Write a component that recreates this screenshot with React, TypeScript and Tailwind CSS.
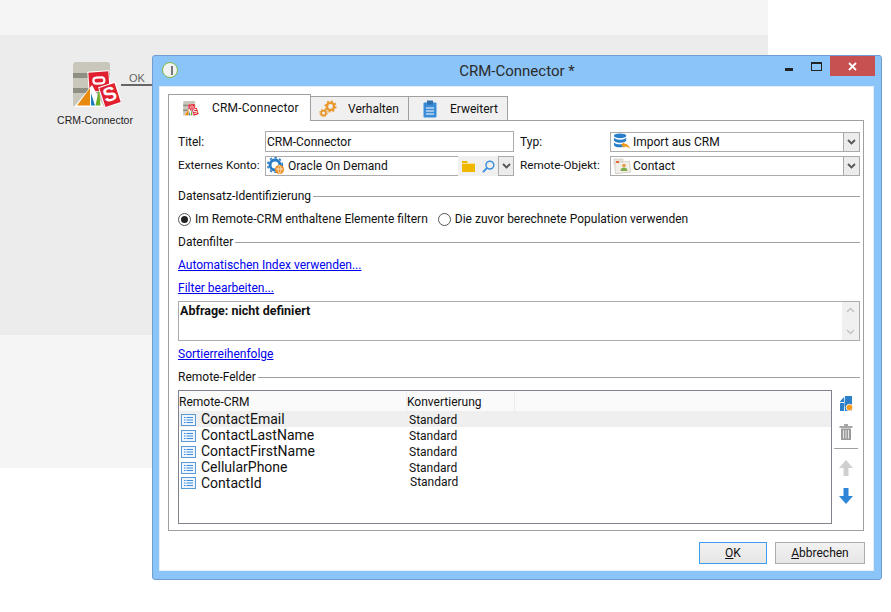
import type { ReactNode } from "react";

const uiFont = "font-['Roboto','Noto_Sans',sans-serif]";

function CrmIcon({ className }: { className: string }) {
  return (
    <svg viewBox="0 0 48 46" className={className}>
      <rect x="0" y="0" width="37" height="45" rx="3" fill="#c9c7bb" />
      <rect x="0" y="11" width="37" height="5" fill="#8f8e82" />
      <rect x="0" y="26" width="37" height="5" fill="#8f8e82" />
      <g transform="rotate(-4 26 20)">
        <rect x="15" y="9" width="22" height="21" fill="#fff" />
        <rect x="16" y="10" width="20" height="19" fill="#e0202f" />
        <rect x="20.500" y="15.500" width="11" height="6" rx="3" fill="none" stroke="#fff" strokeWidth="2.200" />
      </g>
      <path d="M1 45 L19 23 L31 45 Z" fill="#fff" />
      <path d="M4 43.500 L17 26 L17 43.500 Z" fill="#e98a10" />
      <path d="M18 43.500 L18 31 L22 43.500 Z" fill="#1c7dbf" />
      <path d="M22.500 43.500 L26 27 L27.500 43.500 Z" fill="#6ab023" />
      <g transform="rotate(-18 37 33)">
        <rect x="28" y="22" width="18" height="22" fill="#fff" />
        <rect x="29" y="23" width="16" height="20" fill="#e0202f" />
        <text x="37" y="39" textAnchor="middle" fontSize="20" fontWeight="700" fill="#fff" fontFamily="Liberation Sans">S</text>
      </g>
    </svg>
  );
}

function GearsIcon() {
  return (
    <svg viewBox="0 0 18 18" className="h-[18px] w-[18px]">
      <circle cx="11.500" cy="6.500" r="3.600" fill="none" stroke="#e9962a" strokeWidth="2.400" />
      <circle cx="11.500" cy="6.500" r="5.400" fill="none" stroke="#e9962a" strokeWidth="1.400" strokeDasharray="2 2.200" />
      <circle cx="4.500" cy="13" r="2.400" fill="none" stroke="#e9962a" strokeWidth="1.800" />
      <circle cx="4.500" cy="13" r="3.800" fill="none" stroke="#e9962a" strokeWidth="1" strokeDasharray="1.600 1.400" />
    </svg>
  );
}

function ClipboardIcon() {
  return (
    <svg viewBox="0 0 14 18" className="h-[18px] w-[14px]">
      <rect x="0.500" y="2.500" width="13" height="15" rx="1" fill="#3a8bd8" />
      <rect x="4" y="0.500" width="6" height="4" fill="#2f6fae" />
      <path d="M3 8h8M3 11h8M3 14h8" stroke="#fff" strokeWidth="1.200" />
    </svg>
  );
}

function AccountIcon() {
  return (
    <svg viewBox="0 0 18 18" className="h-[18px] w-[18px] shrink-0">
      <circle cx="8" cy="8" r="5" fill="none" stroke="#2c7cc4" strokeWidth="3" />
      <circle cx="8" cy="8" r="7.300" fill="none" stroke="#2c7cc4" strokeWidth="1.600" strokeDasharray="2.400 2.400" />
      <circle cx="12.500" cy="12.500" r="4.500" fill="#ee8f1e" />
      <path d="M9 12h7M12.500 8.500c-2 2-2 5 0 8M12.500 8.500c2 2 2 5 0 8" stroke="#fff" strokeWidth="0.700" fill="none" />
    </svg>
  );
}

function ImportIcon() {
  return (
    <svg viewBox="0 0 18 18" className="h-[17px] w-[18px] shrink-0">
      <ellipse cx="7" cy="3" rx="6.500" ry="2.600" fill="#2a7fc9" />
      <path d="M0.500 4.500v3.100c0 1.400 3 2.600 6.500 2.600s6.500-1.200 6.500-2.600V4.500c0 1.400-3 2.600-6.500 2.600S0.500 5.900 0.500 4.500Z" fill="#2a7fc9" />
      <path d="M0.500 9.500v3.100c0 1.400 3 2.600 6.500 2.600 1 0 2-.1 2.800-.3V11.700c-.9.200-1.800.300-2.800.300-3.500 0-6.500-1-6.500-2.500Z" fill="#2a7fc9" />
      <path d="M8 12.500 11.500 9.500v2c3 0 5 1.500 6 5.500-1.300-2-3-2.800-6-2.800v2Z" fill="#f0981f" />
    </svg>
  );
}

function ContactIcon() {
  return (
    <svg viewBox="0 0 18 18" className="h-[18px] w-[18px] shrink-0">
      <rect x="1" y="2" width="9" height="5" fill="#e9e4da" stroke="#c9c4ba" strokeWidth="0.600" />
      <rect x="2" y="5" width="15" height="11" fill="#f2efe8" stroke="#cfcbc2" strokeWidth="0.800" transform="rotate(-6 9 10)" />
      <circle cx="11" cy="8.500" r="1.800" fill="#e89a4a" />
      <path d="M7.500 14c0-2.500 1.500-3.500 3.500-3.500s3.500 1 3.500 3.500Z" fill="#7dae4c" />
      <rect x="3" y="4" width="3" height="2" fill="#e76a3c" />
    </svg>
  );
}

function FolderIcon() {
  return (
    <svg viewBox="0 0 13 11" className="h-[11px] w-[13px]">
      <path d="M0 0h5l1 2h7v9H0Z" fill="#efb700" />
      <path d="M0 2.500h13" stroke="#fff" strokeWidth="0.600" />
    </svg>
  );
}

function SearchIcon() {
  return (
    <svg viewBox="0 0 14 14" className="h-[13px] w-[13px]">
      <circle cx="8.500" cy="5.500" r="4.200" fill="none" stroke="#3d8fdc" strokeWidth="1.600" />
      <path d="M5.500 8.500 1 13" stroke="#3d8fdc" strokeWidth="2" />
    </svg>
  );
}

function Chevron() {
  return (
    <svg viewBox="0 0 9 6" className="h-[6px] w-[9px]">
      <path d="M1 1l3.500 3.500L8 1" fill="none" stroke="#555" strokeWidth="1.800" />
    </svg>
  );
}

function ListIcon() {
  return (
    <svg viewBox="0 0 15 12" className="h-[12px] w-[15px] shrink-0">
      <rect x="0.500" y="0.500" width="14" height="11" fill="#eef5fc" stroke="#5a9bd5" />
      <path d="M3 3.500h1.500M3 6h1.500M3 8.500h1.500M5.500 3.500H12M5.500 6H12M5.500 8.500H12" stroke="#3d8fdc" />
    </svg>
  );
}

function NewFieldIcon() {
  return (
    <svg viewBox="0 0 14 16" className="h-[16px] w-[14px]">
      <path d="M1 5.500 5 1v5H1ZM6 0h7v15H6v-5H1v5h4" fill="#2c7fc9" />
      <path d="M1 7h4v8H1Z" fill="#2c7fc9" />
      <circle cx="10.500" cy="11.500" r="3.300" fill="#f39a1f" stroke="#fff" strokeWidth="0.800" />
    </svg>
  );
}

function TrashIcon() {
  return (
    <svg viewBox="0 0 14 16" className="h-[16px] w-[14px]">
      <path d="M5 1h4M0.500 3h13" stroke="#8a8a8a" strokeWidth="1.500" />
      <path d="M2 4.500h10V16H2Z" fill="#9a9a9a" />
      <path d="M4.500 6v8.500M7 6v8.500M9.500 6v8.500" stroke="#e8e8e8" />
    </svg>
  );
}

function ArrowIcon({ color, down }: { color: string; down?: boolean }) {
  return (
    <svg viewBox="0 0 14 16" className="h-[16px] w-[14px]">
      <path d={down ? "M4.500 0h5v8H14l-7 8-7-8h4.500Z" : "M4.500 16h5V8H14L7 0 0 8h4.500Z"} fill={color} />
    </svg>
  );
}

function SectionTitle({ children }: { children: ReactNode }) {
  return (
    <div className="flex h-4 items-center gap-[2px]">
      <span>{children}</span>
      <div className="h-px flex-1 bg-[#a0a0a0]" />
    </div>
  );
}

function Radio({ checked, label }: { checked?: boolean; label: string }) {
  return (
    <label className="flex items-center gap-[4px]">
      <span className="flex h-[13px] w-[13px] items-center justify-center rounded-full border border-[#555] bg-white">
        {checked && <span className="h-[7px] w-[7px] rounded-full bg-[#222]" />}
      </span>
      <span>{label}</span>
    </label>
  );
}

function Combo({ icon, value }: { icon: ReactNode; value: string }) {
  return (
    <div className="flex h-5 items-center border border-[#ababab] bg-white">
      <div className="flex flex-1 items-center gap-[2px] pl-[2px]">
        {icon}
        <span>{value}</span>
      </div>
      <div className="flex h-full w-4 items-center justify-center border-l border-[#ababab] bg-[#ececec]">
        <Chevron />
      </div>
    </div>
  );
}

function LinkRow({ children }: { children: ReactNode }) {
  return <a className="block h-4 leading-4 text-[#0000ee] underline">{children}</a>;
}

const rows = [
  { name: "ContactEmail", selected: true },
  { name: "ContactLastName" },
  { name: "ContactFirstName" },
  { name: "CellularPhone" },
  { name: "ContactId", shifted: true },
];

export default function App() {
  return (
    <div className={`relative h-[612px] w-[891px] overflow-hidden bg-white text-[12px] text-[#111] ${uiFont}`}>
      <div className="w-[768px]">
        <div className="h-[35px] bg-[#f5f5f5]" />
        <div className="h-[300px] bg-[#ececec]" />
        <div className="h-[133px] bg-[#f5f5f5]" />
      </div>

      {/* workflow node */}
      <div className="absolute left-[50px] top-[62px] flex w-[90px] flex-col items-center">
        <CrmIcon className="ml-[4px] h-[46px] w-[48px]" />
        <span className="mt-[4px] whitespace-nowrap font-['Liberation_Sans'] text-[10.500px] leading-4 text-[#222]">
          CRM-Connector
        </span>
      </div>
      <div className="absolute left-[121px] top-[84px] h-[2px] w-[32px] bg-[#666]" />
      <span className="absolute left-[129px] top-[71px] font-['Liberation_Sans'] text-[11px] leading-[14px] text-[#666]">OK</span>

      {/* dialog */}
      <div className="absolute left-[152px] top-[55px] flex h-[525px] w-[730px] flex-col rounded-[3px] border border-[#6f9fd0] bg-[#8ac4f9]">
        <div className="relative flex h-[30px] shrink-0 items-center justify-center">
          <div className="absolute left-[9px] top-[6px] flex h-[16px] w-[16px] items-center justify-center rounded-full border border-[#7dbb4a] bg-[#f2f2f2]">
            <div className="h-[9px] w-[6px] border-r-2 border-[#777]" />
          </div>
          <span className="pt-[1px] text-[15px] text-[#2a2a2a]">CRM-Connector *</span>
          <div className="absolute right-[6px] top-0 flex items-start">
            <div className="mr-[18px] mt-[12px] h-[3px] w-[8px] bg-[#222]" />
            <div className="mr-[8px] mt-[6px] h-[9px] w-[11px] border border-t-2 border-[#222]" />
            <div className="flex h-[20px] w-[45px] items-center justify-center bg-[#c75050]">
              <svg viewBox="0 0 9 9" className="h-[9px] w-[9px]">
                <path d="M1 1l7 7M8 1l-7 7" stroke="#fff" strokeWidth="1.800" />
              </svg>
            </div>
          </div>
        </div>

        <div className="ml-[6px] flex h-[485px] w-[715px] flex-col border border-[#e6eef6] bg-white pl-[8px] pt-[7px]">
          {/* tabs */}
          <div className="relative z-10 -mb-px flex items-end">
            <div className="flex h-[27px] w-[143px] items-center border border-b-0 border-[#a0a0a0] bg-white pl-[14px]">
              <CrmIcon className="h-[15px] w-[16px]" />
              <span className="ml-[13px] tracking-[0.2px]">CRM-Connector</span>
            </div>
            <div className="flex h-[25px] w-[98px] items-center border border-l-0 border-[#a0a0a0] bg-[#f0f0f0] pl-[8px]">
              <GearsIcon />
              <span className="ml-[11px]">Verhalten</span>
            </div>
            <div className="flex h-[25px] w-[99px] items-center border border-l-0 border-[#a0a0a0] bg-[#f0f0f0] pl-[14px]">
              <ClipboardIcon />
              <span className="ml-[13px]">Erweitert</span>
            </div>
          </div>

          {/* tab panel */}
          <div className="flex h-[411px] w-[696px] flex-col border border-[#a0a0a0] pl-[9px] pr-[3px] pt-[10px]">
            <div className="grid grid-cols-[87px_249px_96px_250px] grid-rows-[21px_20px] items-center gap-y-[4px]">
              <span>Titel:</span>
              <div className="flex h-full items-center border border-[#ababab] pl-[1px]">CRM-Connector</div>
              <span className="pl-[6px]">Typ:</span>
              <Combo icon={<ImportIcon />} value="Import aus CRM" />

              <span className="whitespace-nowrap text-[11.700px]">Externes Konto:</span>
              <div className="flex h-full">
                <div className="flex flex-1 items-center gap-[3px] border border-r-0 border-[#ababab] pl-[1px]">
                  <AccountIcon />
                  <span>Oracle On Demand</span>
                </div>
                <div className="flex w-[40px] items-center gap-[7px] bg-[#f0f0f0] pl-[4px]">
                  <FolderIcon />
                  <SearchIcon />
                </div>
                <div className="flex w-[16px] items-center justify-center border border-[#ababab] bg-[#ececec]">
                  <Chevron />
                </div>
              </div>
              <span className="whitespace-nowrap pl-[6px] text-[11.700px]">Remote-Objekt:</span>
              <Combo icon={<ContactIcon />} value="Contact" />
            </div>

            <div className="mt-[12px]">
              <SectionTitle>Datensatz-Identifizierung</SectionTitle>
            </div>
            <div className="mt-[7px] flex h-4 items-center gap-[10px]">
              <Radio checked label="Im Remote-CRM enthaltene Elemente filtern" />
              <Radio label="Die zuvor berechnete Population verwenden" />
            </div>
            <div className="mt-[7px]">
              <SectionTitle>Datenfilter</SectionTitle>
            </div>
            <div className="mt-[7px]">
              <LinkRow>Automatischen Index verwenden...</LinkRow>
            </div>
            <div className="mt-[7px]">
              <LinkRow>Filter bearbeiten...</LinkRow>
            </div>
            <div className="mt-[5px] flex h-[40px] justify-between border border-[#ababab]">
              <span className="pl-[1px] text-[12.500px] font-bold leading-[18px]">Abfrage: nicht definiert</span>
              <div className="flex w-[17px] flex-col items-center justify-between bg-[#f0f0f0] py-[5px]">
                <svg viewBox="0 0 9 6" className="h-[6px] w-[9px]">
                  <path d="M1 5l3.500-3.500L8 5" fill="none" stroke="#c4c4c4" strokeWidth="1.500" />
                </svg>
                <svg viewBox="0 0 9 6" className="h-[6px] w-[9px]">
                  <path d="M1 1l3.500 3.500L8 1" fill="none" stroke="#c4c4c4" strokeWidth="1.500" />
                </svg>
              </div>
            </div>
            <div className="mt-[5px]">
              <LinkRow>Sortierreihenfolge</LinkRow>
            </div>
            <div className="mt-[7px]">
              <SectionTitle>Remote-Felder</SectionTitle>
            </div>

            <div className="mt-[5px] flex">
              <div className="h-[134px] w-[654px] border border-[#82828c]">
                <div className="flex h-[20px] items-center bg-[#fafafa] pt-[1px]">
                  <div className="flex h-full w-[228px] items-center border-r border-[#ececec]">Remote-CRM</div>
                  <div className="flex h-full w-[108px] items-center border-r border-[#ececec]">Konvertierung</div>
                </div>
                {rows.map((row) => (
                  <div
                    key={row.name}
                    className={`flex h-4 items-center first:h-[17px] ${row.shifted ? "" : "pt-[1px]"} ${row.selected ? "bg-[#efefef]" : ""}`}
                  >
                    <div className="flex w-[230px] items-center gap-[5px] pl-[2px] text-[14px]">
                      <ListIcon />
                      <span>{row.name}</span>
                    </div>
                    <span className={row.shifted ? "ml-[1px] -translate-y-px" : ""}>Standard</span>
                  </div>
                ))}
              </div>
              <div className="ml-[2px] flex w-[24px] flex-col items-center pt-[6px]">
                <NewFieldIcon />
                <div className="mt-[12px] h-4">
                  <TrashIcon />
                </div>
                <div className="mt-[8px] h-px w-full bg-[#a0a0a0]" />
                <div className="mt-[11px] h-4">
                  <ArrowIcon color="#cfcfcf" />
                </div>
                <div className="mt-[12px] h-4">
                  <ArrowIcon color="#2f86d9" down />
                </div>
              </div>
            </div>
          </div>

          {/* footer buttons */}
          <div className="mr-[8px] mt-[11px] flex justify-end gap-[8px]">
            <button className="h-[22px] w-[68px] border border-[#3d9bf0] bg-gradient-to-b from-[#f2f2f2] to-[#e6e6e6]">
              <span className="underline">O</span>K
            </button>
            <button className="h-[22px] w-[90px] border border-[#acacac] bg-gradient-to-b from-[#f2f2f2] to-[#e6e6e6]">
              <span className="underline">A</span>bbrechen
            </button>
          </div>
        </div>
      </div>
    </div>
  );
}
